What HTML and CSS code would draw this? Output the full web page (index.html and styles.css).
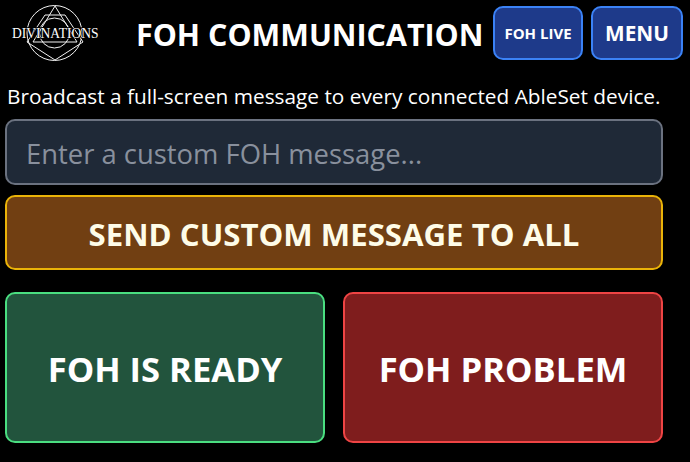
FILE: index.html
```html
<!DOCTYPE html>
<html lang="en">
<head>
    <meta charset="UTF-8">
    <meta name="viewport" content="width=device-width, initial-scale=1.0">
    <title>FOH Communication</title>
    <link rel="stylesheet" href="styles.css">
</head>
<body>
    <div class="header">
        <svg class="logo" width="100" height="64" viewBox="0 0 100 64">
            <g fill="none" stroke="#f2f2f2" stroke-width="1">
                <circle cx="49.5" cy="32" r="27.5"/>
                <circle cx="49.5" cy="32" r="15"/>
                <polyline points="28,41 50,5 72,41"/>
                <polygon points="40,14 60,14 78,41 50,59 22,41"/>
                <line x1="28" y1="41" x2="72" y2="41"/>
            </g>
            <text class="logo-text" transform="translate(7 37) scale(0.875 1)">DIVINATIONS</text>
        </svg>
        <h1>FOH COMMUNICATION</h1>
        <button class="nav-btn nav-small">FOH LIVE</button>
        <button class="nav-btn">MENU</button>
    </div>
    <div class="content">
        <p class="intro">Broadcast a full-screen message to every connected AbleSet device.</p>
        <input class="message-input" type="text" placeholder="Enter a custom FOH message...">
        <button class="send-btn">SEND CUSTOM MESSAGE TO ALL</button>
        <div class="status-row">
            <button class="status-btn ready">FOH IS READY</button>
            <button class="status-btn problem">FOH PROBLEM</button>
        </div>
    </div>
</body>
</html>
```

FILE: styles.css
```css
* {
    box-sizing: border-box;
}

body {
    font-family: "Open Sans", "Noto Sans", sans-serif;
    background-color: #000;
    color: #fff;
    margin: 0;
    padding: 0;
}

button {
    font-family: inherit;
    color: #fff;
}

.header {
    display: flex;
    align-items: center;
    height: 66px;
    padding: 0 7px 0 5px;
}

.logo {
    flex: none;
}

.logo-text {
    font-family: "Liberation Serif", serif;
    font-size: 15.5px;
    fill: #fff;
    stroke: #000;
    stroke-width: 1.5px;
    paint-order: stroke;
}

.header h1 {
    flex: 1;
    margin: 0 0 0 31px;
    padding-top: 2px;
    font-size: 30.4px;
    font-weight: 700;
    white-space: nowrap;
}

.nav-btn {
    width: 92px;
    height: 54px;
    margin-left: 8px;
    padding: 0;
    background-color: #1e3a8a;
    border: 2px solid #3b82f6;
    border-radius: 10px;
    font-size: 20.8px;
    font-weight: 700;
}

.nav-small {
    width: 90px;
    font-size: 15px;
}

.content {
    width: 658px;
    margin-left: 5px;
}

.intro {
    margin: 17px 0 9px 2px;
    font-size: 20.8px;
    line-height: 27px;
    white-space: nowrap;
}

.message-input {
    display: block;
    width: 100%;
    height: 66px;
    padding: 2px 19px 0;
    background-color: #1f2937;
    border: 2px solid #6b7280;
    border-radius: 10px;
    color: #fff;
    font-family: inherit;
    font-size: 27.4px;
}

.message-input::placeholder {
    color: #9ca3af;
    opacity: 0.85;
}

.send-btn {
    display: block;
    width: 100%;
    height: 75px;
    margin-top: 10px;
    padding-top: 3px;
    background-color: #713f12;
    border: 2px solid #eab308;
    border-radius: 10px;
    color: #fefce8;
    font-size: 31.2px;
    font-weight: 700;
}

.status-row {
    display: flex;
    justify-content: space-between;
    margin-top: 22px;
}

.status-btn {
    width: 320px;
    height: 151px;
    padding-top: 3px;
    border-radius: 10px;
    border-width: 2px;
    border-style: solid;
    font-size: 34.6px;
    font-weight: 700;
}

.ready {
    background-color: #22543d;
    border-color: #4ade80;
}

.problem {
    background-color: #7f1d1d;
    border-color: #ef4444;
}
```
